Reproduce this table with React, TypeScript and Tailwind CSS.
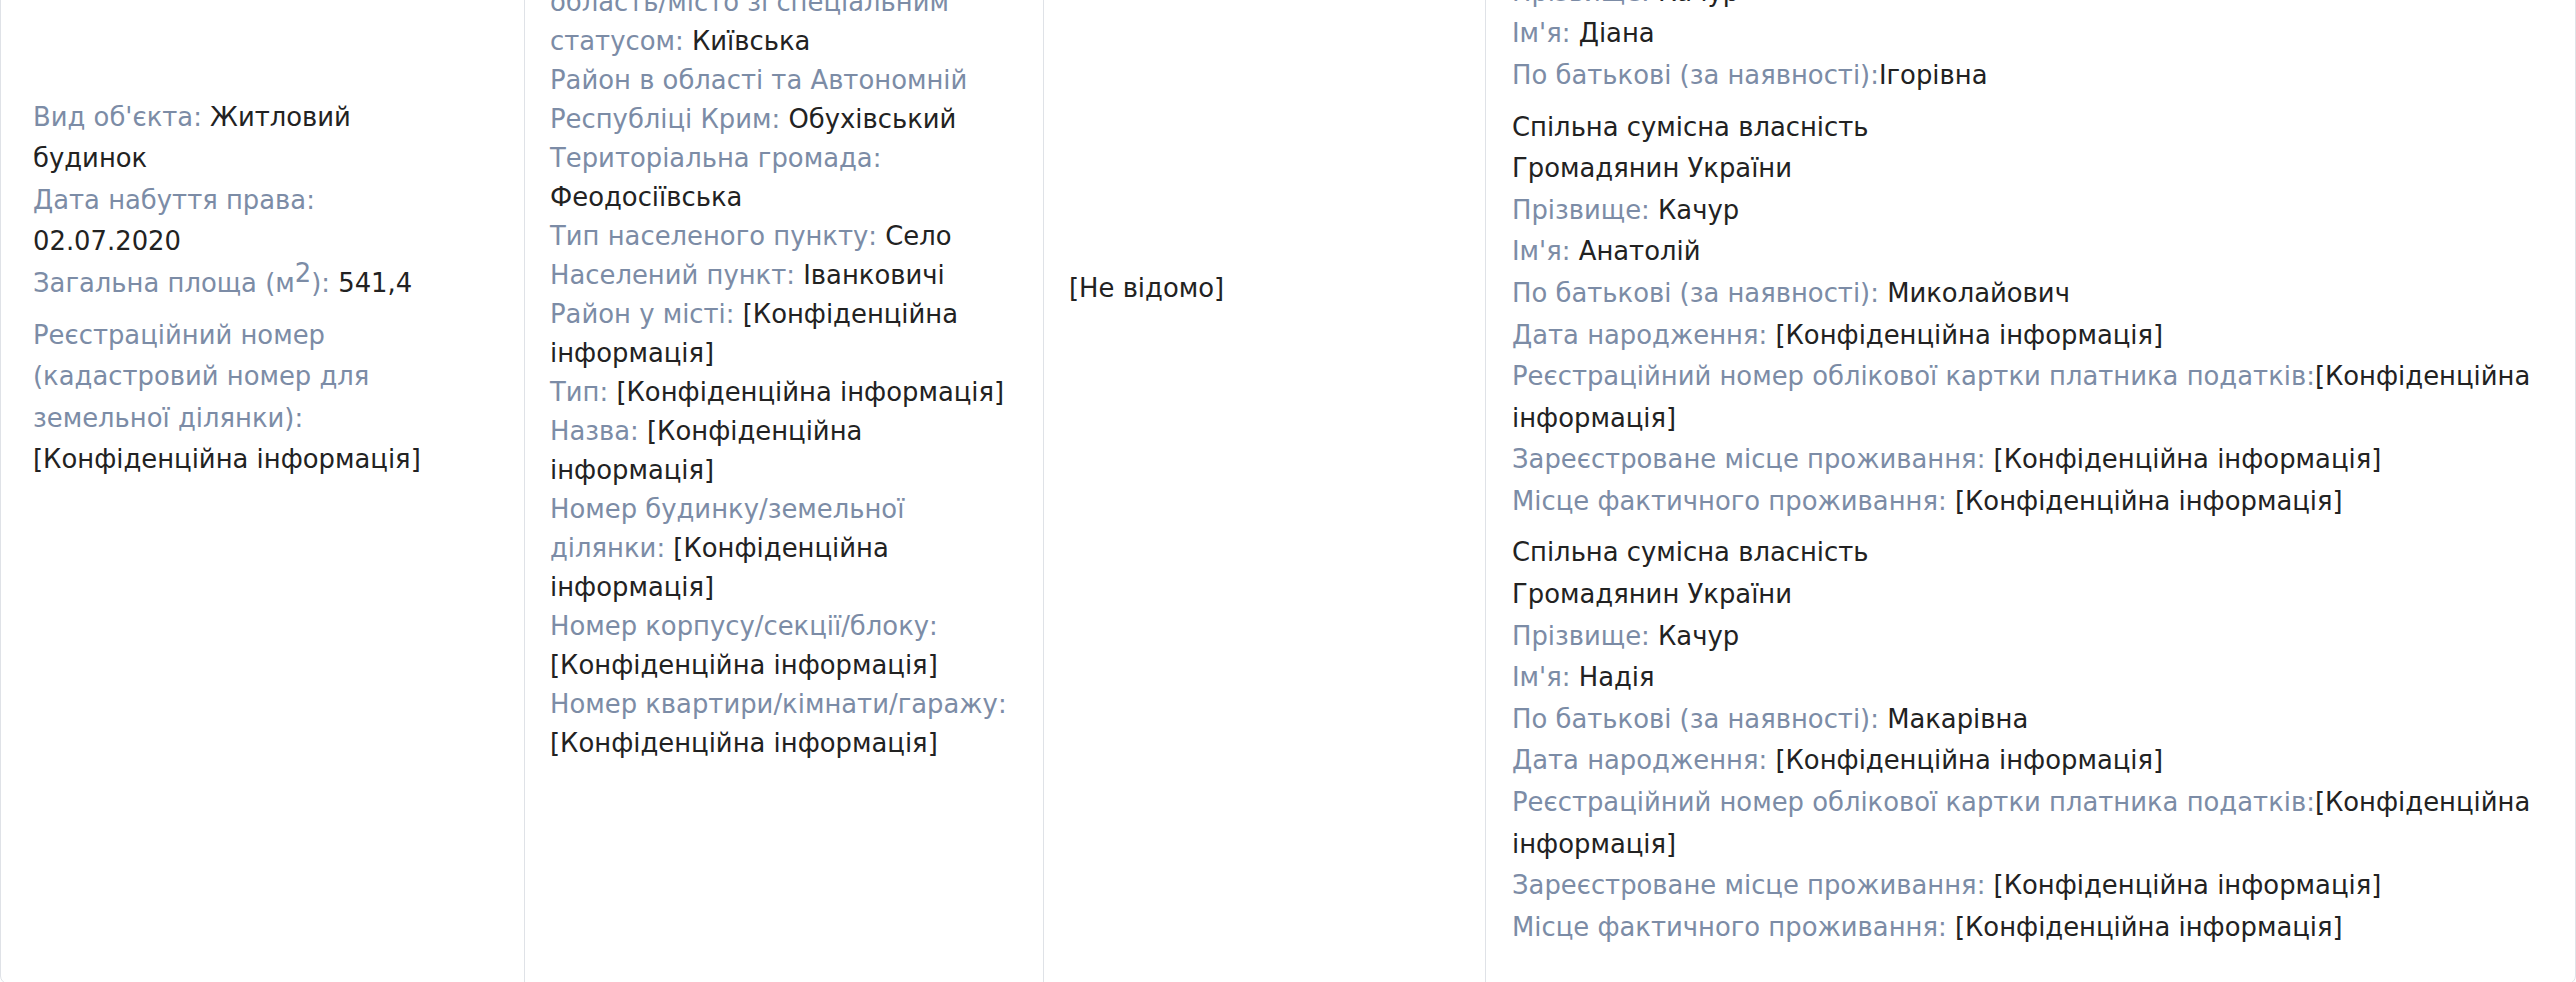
import React from "react";

const L = ({ children }: { children: React.ReactNode }) => (
  <span className="text-[#7c8ca6]">{children}</span>
);

const Line = ({ label, value, nospace }: { label: string; value: string; nospace?: boolean }) => (
  <div>
    <L>{label}</L>
    {nospace ? "" : " "}
    {value}
  </div>
);

const C = "[Конфіденційна інформація]";

type Owner = { rows: { label?: string; value: string; nospace?: boolean }[] };

const owners: Owner[] = [
  {
    rows: [
      { value: "Спільна сумісна власність" },
      { value: "Громадянин України" },
      { label: "Прізвище:", value: "Качур" },
      { label: "Ім'я:", value: "Сергій" },
      { label: "По батькові (за наявності):", value: "Анатолійович" },
      { label: "Дата народження:", value: C },
    ],
  },
  {
    rows: [
      { value: "Спільна сумісна власність" },
      { value: "Громадянин України" },
      { label: "Прізвище:", value: "Качур" },
      { label: "Ім'я:", value: "Діана" },
      { label: "По батькові (за наявності):", value: "Ігорівна", nospace: true },
    ],
  },
  {
    rows: [
      { value: "Спільна сумісна власність" },
      { value: "Громадянин України" },
      { label: "Прізвище:", value: "Качур" },
      { label: "Ім'я:", value: "Анатолій" },
      { label: "По батькові (за наявності):", value: "Миколайович" },
      { label: "Дата народження:", value: C },
      { label: "Реєстраційний номер облікової картки платника податків:", value: C, nospace: true },
      { label: "Зареєстроване місце проживання:", value: C },
      { label: "Місце фактичного проживання:", value: C },
    ],
  },
  {
    rows: [
      { value: "Спільна сумісна власність" },
      { value: "Громадянин України" },
      { label: "Прізвище:", value: "Качур" },
      { label: "Ім'я:", value: "Надія" },
      { label: "По батькові (за наявності):", value: "Макарівна" },
      { label: "Дата народження:", value: C },
      { label: "Реєстраційний номер облікової картки платника податків:", value: C, nospace: true },
      { label: "Зареєстроване місце проживання:", value: C },
      { label: "Місце фактичного проживання:", value: C },
    ],
  },
];

export default function App() {
  return (
    <div
      className="w-full h-[982px] overflow-hidden bg-white text-[#222222] text-[25.85px]"
      style={{ fontFamily: '"DejaVu Sans", "Noto Sans", sans-serif' }}
    >
      <div className="mt-[-407px] flex border border-[#dfe2e7] rounded-[8px]">
        {/* Column 1 */}
        <div className="w-[523px] shrink-0 pl-[32px] flex items-center">
          <div className="w-[410px] leading-[41.6px]">
            <Line label="Вид об'єкта:" value="Житловий будинок" />
            <Line label="Дата набуття права:" value="02.07.2020" />
            <div>
              <L>
                Загальна площа (м<sup className="text-[25.85px] top-[-10px]">2</sup>):
              </L>{" "}
              541,4
            </div>
            <div className="mt-[10px]">
              <L>Реєстраційний номер (кадастровий номер для земельної ділянки):</L> {C}
            </div>
          </div>
        </div>

        {/* Column 2 */}
        <div className="w-[519px] shrink-0 border-l border-[#dfe2e7] pl-[25px] pr-[24px] pb-[36px] flex items-center">
          <div className="leading-[39px]">
            <div>
              <Line label="Країна:" value="Україна" />
              <Line label="Індекс:" value={C} />
            </div>
            <div className="mt-[10px]">
              <div>
                <L>
                  Область/Автономна Республіка Крим/
                  <br />
                  область/місто зі спеціальним статусом:
                </L>{" "}
                Київська
              </div>
              <Line label="Район в області та Автономній Республіці Крим:" value="Обухівський" />
              <Line label="Територіальна громада:" value="Феодосіївська" />
              <Line label="Тип населеного пункту:" value="Село" />
              <Line label="Населений пункт:" value="Іванковичі" />
              <Line label="Район у місті:" value={C} />
              <Line label="Тип:" value={C} />
              <Line label="Назва:" value={C} />
              <Line label="Номер будинку/земельної ділянки:" value={C} />
              <Line label="Номер корпусу/секції/блоку:" value={C} />
              <Line label="Номер квартири/кімнати/гаражу:" value={C} />
            </div>
          </div>
        </div>

        {/* Column 3 */}
        <div className="w-[442px] shrink-0 border-l border-[#dfe2e7] pl-[25px] pr-[24px] flex items-center">
          <div className="leading-[41.6px]">[Не відомо]</div>
        </div>

        {/* Column 4 */}
        <div className="flex-1 min-w-0 border-l border-[#dfe2e7] pl-[26px] pr-[26px] py-[35px]">
          <div className="leading-[41.6px] flex flex-col gap-[10px]">
            {owners.map((o, i) => (
              <div key={i}>
                {o.rows.map((r, j) =>
                  r.label ? (
                    <Line key={j} label={r.label} value={r.value} nospace={r.nospace} />
                  ) : (
                    <div key={j}>{r.value}</div>
                  )
                )}
              </div>
            ))}
          </div>
        </div>
      </div>
    </div>
  );
}
